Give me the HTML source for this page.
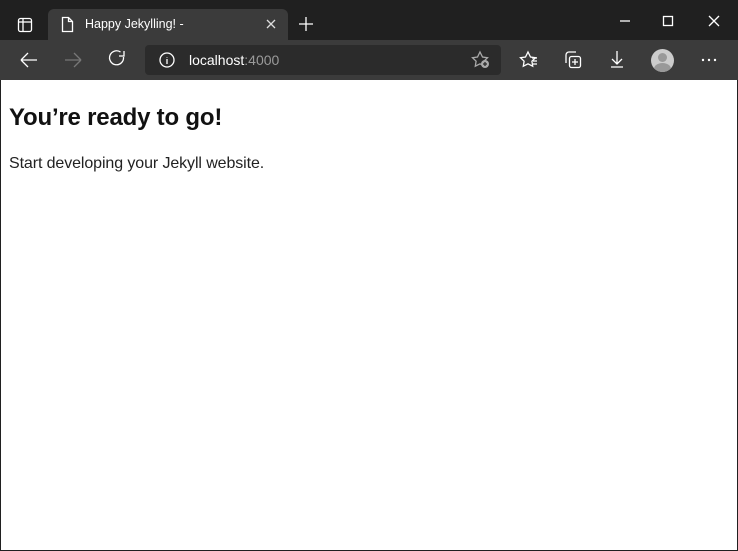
<!DOCTYPE html>
<html><head><style>
*{margin:0;padding:0;box-sizing:border-box}
body{width:738px;height:551px;background:#202020;position:relative;overflow:hidden;font-family:"Liberation Sans",sans-serif}
.abs{position:absolute}
svg{position:absolute}
</style></head><body>
<div class="abs" style="left:0;top:0;width:738px;height:40px;background:#202020"></div>
<div class="abs" style="left:48px;top:9px;width:240px;height:32px;background:#3b3b3b;border-radius:6px 6px 0 0"></div>
<div class="abs" style="left:85px;top:17px;color:#fff;font-size:12.5px">Happy Jekylling! -</div>
<div class="abs" style="left:0;top:40px;width:738px;height:40px;background:#3b3b3b"></div>
<div class="abs" style="left:145px;top:45px;width:356px;height:30px;background:#2b2b2b;border-radius:4px"></div>
<div class="abs" style="left:189px;top:52px;font-size:14px;color:#fff">localhost<span style="color:#9a9a9a">:4000</span></div>
<div class="abs" style="left:1px;top:80px;width:736px;height:470px;background:#fff"></div>
<div class="abs" style="left:9px;top:104px;font-size:24px;font-weight:bold;color:#111;letter-spacing:-0.2px">You’re ready to go!</div>
<div class="abs" style="left:9px;top:155px;font-size:16px;color:#222;letter-spacing:-0.1px">Start developing your Jekyll website.</div>
<svg width="738" height="80" style="left:0;top:0" fill="none" stroke="#fff" stroke-width="1.3">
<rect x="18.5" y="18.5" width="13" height="13" rx="2"/><line x1="23" y1="18.5" x2="23" y2="31.5"/><line x1="18.5" y1="22" x2="31.5" y2="22"/>
<path d="M62.5 17.5h6l4 4v10h-10z M68.5 17.5v4h4"/>
<path d="M267 20l8 8M275 20l-8 8" stroke="#ddd"/>
<path d="M306 17v14M299 24h14"/>
<path d="M620 21h10" /><rect x="663.5" y="16.5" width="9" height="9"/><path d="M709 16l10 10M719 16l-10 10"/>
<path d="M21 60h16M21 60l7-7M21 60l7 7"/>
<path d="M65 60h16M81 60l-7-7M81 60l-7 7" stroke="#777"/>
<path d="M123.5 57a7 7 0 1 1-3-5M124 51v5h-5"/>
<circle cx="167" cy="60" r="7"/><path d="M167 57v0.5M167 59v5"/>
<path d="M480 52l2.5 5 5 .7-3.6 3.5.8 5-4.7-2.4-4.7 2.4.8-5-3.6-3.5 5-.7z" stroke="#aaa"/>
<circle cx="485" cy="64" r="4" fill="#aaa" stroke="none"/><path d="M483 64h4M485 62v4" stroke="#2b2b2b"/>
<path d="M528 52l2.5 5 5 .7-3.6 3.5.8 5-4.7-2.4-4.7 2.4.8-5-3.6-3.5 5-.7z"/><path d="M532 58h5M533 61h4M533 64h4"/>
<rect x="569.5" y="56.5" width="11" height="11" rx="2"/><path d="M566 63v-8a3 3 0 0 1 3-3h7M575 59v6M572 62h6"/>
<path d="M617 51v13M612 59l5 5 5-5M611 67h12"/>
<circle cx="703" cy="60" r="1.2" fill="#fff" stroke="none"/><circle cx="709" cy="60" r="1.2" fill="#fff" stroke="none"/><circle cx="715" cy="60" r="1.2" fill="#fff" stroke="none"/>
</svg>
<div class="abs" style="left:651px;top:49px;width:23px;height:23px;border-radius:50%;background:#ccc;overflow:hidden">
<div class="abs" style="left:7px;top:4px;width:9px;height:9px;border-radius:50%;background:#999"></div>
<div class="abs" style="left:3px;top:14px;width:17px;height:12px;border-radius:50%;background:#999"></div></div>
</body></html>
